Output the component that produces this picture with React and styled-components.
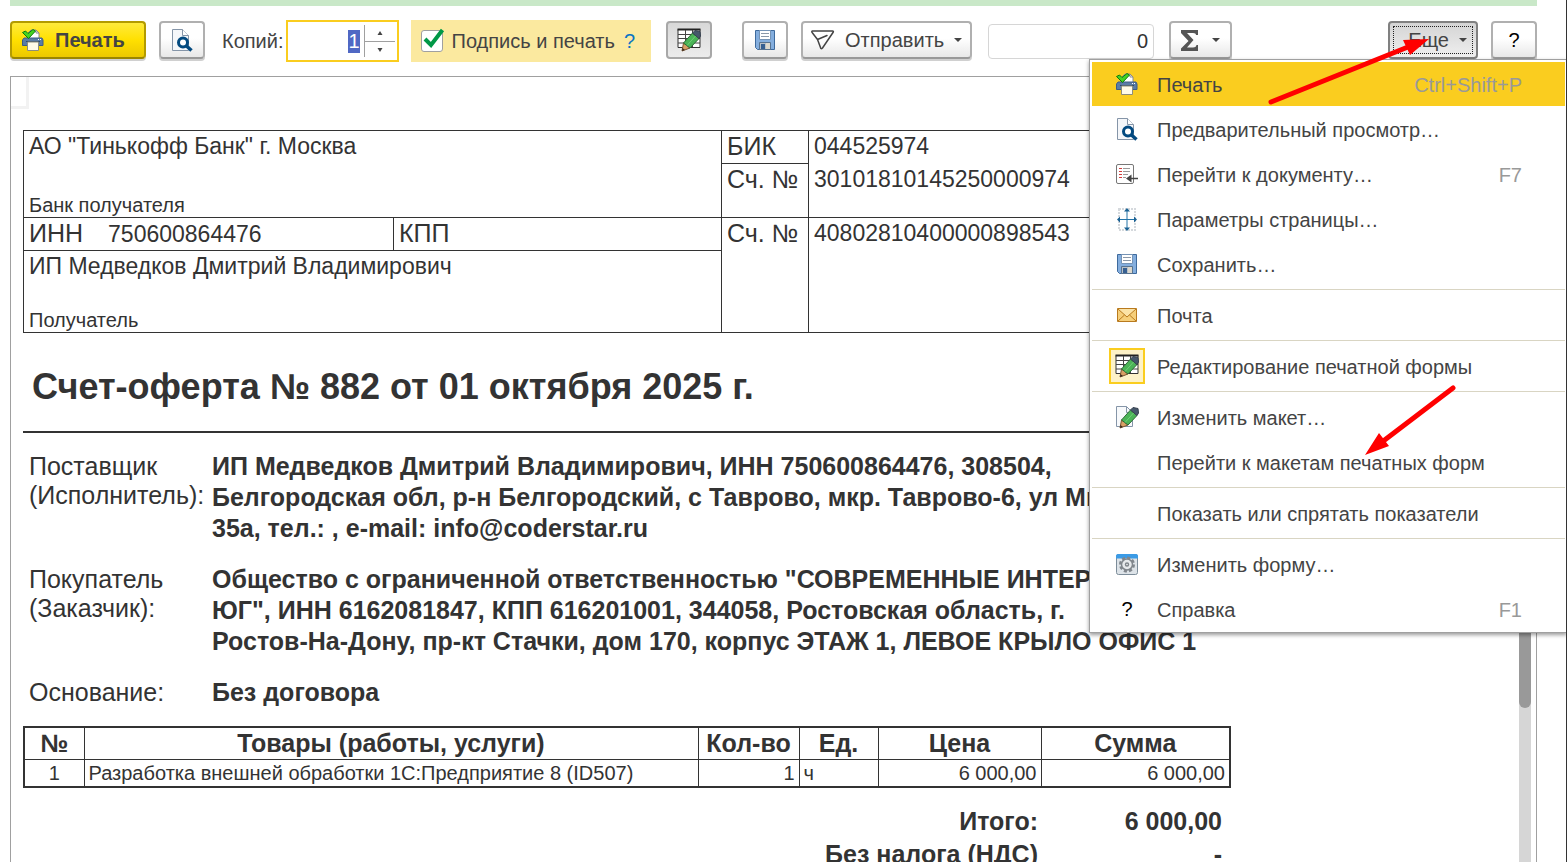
import React, { useEffect, useRef } from 'react'
import styled, { createGlobalStyle, css } from 'styled-components'

const color = {
  text: '#444',
  ink: '#333',
  muted: '#999',
  line: '#a0a0a0',
  accent: '#facd1f',
  accentLight: '#fbe99f',
}

const GlobalStyle = createGlobalStyle`
  * {
    box-sizing: border-box;
  }

  body {
    margin: 0;
    background: #fff;
    color: ${color.text};
    font-family: 'Liberation Sans', Arial, sans-serif;
    font-size: 20px;
    overflow: hidden;
  }

  button,
  input {
    font: inherit;
    color: inherit;
  }
`

/* Window */

const Window = styled.main`
  position: relative;
  display: flex;
  flex-direction: column;
  height: 100vh;
  padding: 0 29px 0 10px;
  border-right: 1px solid #333;
  overflow: hidden;
`

const Notice = styled.div`
  flex: none;
  height: 6px;
  background: #c9e8c8;
`

const Toolbar = styled.header`
  display: flex;
  flex: none;
  align-items: center;
  height: 42px;
  margin: 14px 0;
`

const Group = styled.div`
  display: flex;
  align-items: center;
  gap: 13px;
  margin-right: ${props => props.$after || 0}px;
`

const Spacer = styled.div`
  flex: 1;
`

const Button = styled.button`
  display: flex;
  align-items: center;
  justify-content: ${props => props.$align || 'center'};
  gap: ${props => props.$gap || 10}px;
  height: 38px;
  min-width: ${props => props.$width || 46}px;
  margin-bottom: 2px;
  padding: 0 ${props => props.$pad || 0}px;
  border: 2px solid #b0b0b0;
  border-bottom-color: #999;
  border-radius: 4px;
  background: linear-gradient(#fff 45%, #e8e8e8);
  box-shadow: 0 2px 0 #d0d0d0;
  white-space: nowrap;

  ${props =>
    props.$primary &&
    css`
      border-color: #b39b00;
      border-bottom-color: #9a8500;
      background: linear-gradient(#ffea3c, #ffe000 50%, #ecc800);
      font-weight: bold;
    `}

  ${props =>
    props.$pressed &&
    css`
      border-color: #a8a8a8;
      background: linear-gradient(#d8d8d8, #ececec);
      box-shadow: none;
    `}

  ${props =>
    props.$open &&
    css`
      border-color: #808080;
      background: linear-gradient(#d4d4d4, #efefef);
      box-shadow: none;
      outline: 1px dotted #222;
      outline-offset: -6px;
    `}
`

const Caret = styled.span`
  width: 0;
  border: 4px solid transparent;
  border-top-color: #444;
  border-bottom: 0;
`

const HelpMark = styled.span`
  color: #000;
`

const Label = styled.label`
  margin-right: 2px;
`

const Stepper = styled.div`
  display: flex;
  align-items: center;
  width: 113px;
  height: 42px;
  margin-right: 12px;
  border: 2px solid ${color.accent};
`

const StepperInput = styled.input`
  flex: 1;
  min-width: 0;
  padding: 0 4px 0 0;
  border: 0;
  outline: 0;
  text-align: right;

  &::selection {
    background: #5068c4;
    color: #fff;
  }
`

const StepperButtons = styled.div`
  display: flex;
  flex-direction: column;
  width: 33px;
  padding-right: 2px;
  border-left: 1px solid ${color.line};
`

const StepButton = styled.button`
  display: flex;
  align-items: center;
  justify-content: center;
  height: 16px;
  padding: 0;
  border: 0;
  background: none;

  & + & {
    border-top: 1px solid ${color.line};
  }
`

const SignOption = styled.div`
  display: flex;
  align-items: center;
  gap: 9px;
  height: 42px;
  margin-right: 15px;
  padding: 0 16px 0 10px;
  background: ${color.accentLight};
`

const CheckWrap = styled.span`
  position: relative;
  display: flex;

  svg {
    position: absolute;
    left: 2px;
    bottom: 4px;
    pointer-events: none;
  }
`

const Checkbox = styled.input`
  appearance: none;
  width: 22px;
  height: 22px;
  margin: 0;
  border: 1px solid ${color.line};
  border-radius: 3px;
  background: #fff;
`

const HelpLink = styled.a`
  color: #0a74c4;
  text-decoration: none;
`

const SumField = styled.input`
  width: 166px;
  height: 35px;
  margin-right: 15px;
  padding: 0 5px;
  border: 1px solid #d6d6d6;
  border-radius: 4px;
  color: #333;
  text-align: right;
`

/* Drop-down menu */

const Menu = styled.nav`
  position: absolute;
  top: 59px;
  right: -1px;
  width: 478px;
  padding: 2px 2px 0;
  border: 1px solid ${color.line};
  border-right: 0;
  background: #fff;
  box-shadow: 0 2px 4px rgba(0, 0, 0, 0.4);
`

const MenuItem = styled.button`
  display: flex;
  align-items: center;
  width: 100%;
  height: 44px;
  margin-bottom: 1px;
  padding: 0 43px 0 17px;
  border: 0;
  background: ${props => (props.$active ? color.accent : 'none')};
  text-align: left;
`

const MenuIcon = styled.span`
  display: flex;
  align-items: center;
  justify-content: center;
  width: 36px;
  height: 36px;
  margin-right: 12px;
  border: 2px solid ${props => (props.$checked ? color.accent : 'transparent')};
  background: ${props => (props.$checked ? '#fdf2c8' : 'none')};
  color: #000;
`

const MenuText = styled.span`
  flex: 1;
  padding-top: 2px;
  white-space: nowrap;
`

const Shortcut = styled.span`
  padding-top: 2px;
  color: ${color.muted};
`

const Separator = styled.hr`
  height: 1px;
  margin: 3px 0;
  border: 0;
  background: #d9d5c3;
`

const Arrows = styled.svg`
  position: absolute;
  top: 0;
  right: 0;
  pointer-events: none;
`

/* Printed form */

const Viewer = styled.section`
  display: flex;
  flex: 1;
  min-height: 0;
  border: 1px solid ${color.line};
  border-bottom: 0;
  color: ${color.ink};
`

const Sheet = styled.article`
  flex: 1;
  min-width: 0;
  overflow: hidden;
`

const Corner = styled.div`
  width: 18px;
  height: 32px;
  border: solid #f2f2f2;
  border-width: 0 3px 3px 0;
`

const Content = styled.div`
  width: 1206px;
  margin: 21px 0 0 12px;
`

const ScrollTrack = styled.div`
  width: 12px;
  margin-right: 5px;
  background: #d6d6d6;
`

const ScrollThumb = styled.div`
  height: 631px;
  border-radius: 6px;
  background: #999;
`

const Table = styled.table`
  width: 100%;
  table-layout: fixed;
  border-collapse: collapse;
`

const BankCell = styled.td`
  height: ${props => props.$height}px;
  padding: 0 5px;
  border: 1px solid ${color.ink};
  border-top-width: ${props => (props.$joined ? 0 : 1)}px;
  border-bottom-width: ${props => (props.$open ? 0 : 1)}px;
  font-size: ${props => (props.$value ? 23 : 25)}px;
  line-height: 31px;
  vertical-align: top;
  white-space: nowrap;
`

const Stack = styled.div`
  display: flex;
  flex-direction: column;
  justify-content: space-between;
  height: ${props => props.$height}px;
  font-size: 23px;
`

const Caption = styled.small`
  font-size: 20px;
  line-height: 24px;
`

const TaxId = styled.span`
  margin-left: 25px;
  font-size: 23px;
`

const Title = styled.h1`
  margin: 0;
  padding: 31px 0 21px 9px;
  border-bottom: 2px solid ${color.ink};
  font-size: 36px;
  line-height: 46px;
  white-space: nowrap;
`

const Parties = styled.dl`
  display: grid;
  grid-template-columns: 183px 1fr;
  row-gap: 20px;
  margin: 18px 0 18px;
  padding-left: 6px;
  font-size: 25px;
`

const PartyLabel = styled.dt`
  padding-top: 1px;
  line-height: 29px;
  white-space: pre;
`

const PartyValue = styled.dd`
  margin: 0;
  font-weight: bold;
  line-height: 31px;
  white-space: pre;
`

const Goods = styled(Table)`
  border: 2px solid ${color.ink};
`

const GoodsHead = styled.th`
  height: 32px;
  padding: 0;
  border: 1px solid ${color.ink};
  font-size: 25px;
  line-height: 30px;
`

const GoodsCell = styled.td`
  height: 28px;
  padding: 0 4px;
  border: 1px solid ${color.ink};
  line-height: 26px;
  text-align: ${props => props.$align || 'left'};
  white-space: nowrap;
`

const Totals = styled(Table)`
  margin-top: 17px;
  font-size: 25px;
  font-weight: bold;
`

const TotalLabel = styled.th`
  padding: 0 3px 0 0;
  line-height: 33px;
  text-align: right;
`

const TotalValue = styled.td`
  padding: 0 7px 0 0;
  text-align: right;
`

/* Icons */

const PrintIcon = () => (
  <svg width="22" height="22" viewBox="0 0 22 22">
    <path d="M6 10V4l3-3h5l3 3v6z" fill="#fff" stroke="#8a8a8a" />
    <path d="M14 1v3h3" fill="none" stroke="#8a8a8a" />
    <path d="M2 9h18l1 2v5.500H0.500V11z" fill="#5a7ca6" stroke="#3d5d85" />
    <path d="M4 12.500h14" stroke="#2f4a6d" />
    <path d="M16 10.500h1M18 10.500h1" stroke="#fff" />
    <path d="M5.500 13h11v8.500h-11z" fill="#fffbe8" stroke="#8d8d7c" />
    <path
      d="M0.500 3.500L3.500 2l2.500 2.500L11 0.500 13.500 2 6.500 9.500z"
      fill="#45d321"
      stroke="#0b7a0d"
    />
  </svg>
)

const PreviewIcon = () => (
  <svg width="22" height="23" viewBox="0 0 22 23">
    <path
      d="M1.500 0.500h10l6 6v15h-16z"
      fill="#f5f7fa"
      stroke="#8595a8"
    />
    <path d="M11.500 0.500v6h6" fill="#fff" stroke="#8595a8" />
    <circle cx="12" cy="13.500" r="4.500" fill="#fff" stroke="#034a80" strokeWidth="3" />
    <path d="M15.500 17l5 4.500" stroke="#034a80" strokeWidth="3.500" />
  </svg>
)

const Pencil = () => (
  <g>
    <path d="M5 23l1.500-8 6.500 5z" fill="#d9a066" stroke="#7b5530" />
    <path d="M5 23l.5-3 2.500 2z" fill="#3a2a20" />
    <path d="M6.500 15L15.500 5l6.500 5.500-9 9.500z" fill="#4bb457" stroke="#2c6b35" />
    <path d="M10 17.500L18.500 8" stroke="#6fd176" />
    <path d="M15.500 5L18 2.500l5 1 .5 4.500-1.500 2.500z" fill="#46586b" stroke="#36414f" />
  </g>
)

const EditIcon = () => (
  <svg width="25" height="24" viewBox="0 0 25 24">
    <path d="M1 1.500h22v18H1z" fill="#fff" stroke="#333" />
    <path d="M0.500 1.500h23" stroke="#222" strokeWidth="2" />
    <path d="M1 6.500h22M1 10.500h22M1 15h22M8.500 2v17M15.500 2v17" stroke="#444" />
    <Pencil />
  </svg>
)

const TemplateIcon = () => (
  <svg width="25" height="24" viewBox="0 0 25 24">
    <path d="M1.500 1.500h10l6 6v14h-16z" fill="#f7f9fb" stroke="#8595a8" />
    <path d="M11.500 1.500v6h6" fill="none" stroke="#8595a8" />
    <Pencil />
  </svg>
)

const SaveIcon = () => (
  <svg width="20" height="20" viewBox="0 0 20 20">
    <path d="M0.500 0.500h19v19h-17l-2-2z" fill="#84aede" stroke="#3e6a9d" />
    <path d="M4.500 0.500h11v9h-11z" fill="#fff" stroke="#7593b5" />
    <path d="M6 3.500h8M6 6.500h8" stroke="#8b98a8" />
    <path d="M4.500 12.500h11v7h-11z" fill="#b9c0c6" stroke="#587390" />
    <path d="M6 14h4v5H6z" fill="#365f91" />
    <path d="M11 13h4v6h-4z" fill="#dcd8cd" />
  </svg>
)

const SendIcon = () => (
  <svg width="24" height="20" viewBox="0 0 24 20">
    <path
      d="M1.500 1h20q1.500 0 .5 1.500L11.500 18q-1.500 1.500-2-.5L6.500 9.500l-5-6.500Q0 1.500 1.500 1z M6.500 9.500L16 5.500"
      fill="none"
      stroke="#444"
      strokeWidth="1.500"
      strokeLinejoin="round"
      strokeLinecap="round"
    />
  </svg>
)

const SumIcon = () => (
  <svg width="18" height="21" viewBox="0 0 18 21">
    <path
      d="M0 0h17v5h-2q0-2-3-2H6l6.500 7L6 17.500h6q3 0 3.500-2.500H17v6H0v-2.500L7.500 11 0 3z"
      fill="#555"
    />
  </svg>
)

const CheckIcon = () => (
  <svg width="22" height="20" viewBox="0 0 22 20">
    <path d="M2 11l6 6L19.500 2" fill="none" stroke="#009846" strokeWidth="4" />
  </svg>
)

const GoToIcon = () => (
  <svg width="22" height="20" viewBox="0 0 22 20">
    <rect x="0.500" y="0.500" width="17" height="19" rx="1.500" fill="#fff" stroke="#777" />
    <path d="M3 4.500h3M3 7.500h3M3 10.500h3M3 13.500h3" stroke="#d33c3c" />
    <path d="M7 4.500h7M7 7.500h7M7 10.500h5M7 13.500h3" stroke="#999" />
    <path d="M14 14.500h8" stroke="#444" strokeWidth="1.500" />
    <path d="M10 14.500l5.500-4v8z" fill="#444" />
  </svg>
)

const PageSetupIcon = () => (
  <svg width="20" height="23" viewBox="0 0 20 23">
    <path d="M2 1h16v21H2z" fill="#fff" stroke="#d5d9dd" strokeWidth="2" strokeDasharray="2 1" />
    <path d="M10 2v19M2 11.500h16" stroke="#2474a8" />
    <path
      d="M10 0l3 3.500H7zM10 23l3-3.500H7zM0 11.500l3-3v6zM20 11.500l-3-3v6z"
      fill="#1b6294"
    />
  </svg>
)

const MailIcon = () => (
  <svg width="20" height="14" viewBox="0 0 20 14">
    <path d="M0.500 0.500h19v13H0.500z" fill="#f6cf7a" stroke="#b97a1e" />
    <path d="M1 1l9 8 9-8M1 13l6.500-6M19 13l-6.500-6" fill="#fbe3a7" stroke="#b97a1e" />
  </svg>
)

const FormIcon = () => (
  <svg width="22" height="21" viewBox="0 0 22 21">
    <rect x="0.500" y="0.500" width="21" height="20" rx="2" fill="#dde3e8" stroke="#7c8c99" />
    <path d="M0 4.500V2q0-2 2-2h18q2 0 2 2v2.500z" fill="#3b9be6" />
    <circle cx="11" cy="10.500" r="6.500" fill="none" stroke="#80868c" strokeWidth="3" strokeDasharray="3 2" />
    <circle cx="11" cy="10.500" r="5.500" fill="#e6e9eb" stroke="#80868c" strokeWidth="1.500" />
    <circle cx="11" cy="10.500" r="1.500" fill="#fff" stroke="#80868c" strokeWidth="1.500" />
  </svg>
)

const StepArrow = ({ down }) => (
  <svg width="6" height="4" viewBox="0 0 6 4">
    <path d={down ? 'M0.500 0h5L3 4z' : 'M0.500 4h5L3 0z'} fill="#444" />
  </svg>
)

const menuGroups = [
  [
    { text: 'Печать', icon: <PrintIcon />, shortcut: 'Ctrl+Shift+P', active: true },
    { text: 'Предварительный просмотр…', icon: <PreviewIcon /> },
    { text: 'Перейти к документу…', icon: <GoToIcon />, shortcut: 'F7' },
    { text: 'Параметры страницы…', icon: <PageSetupIcon /> },
    { text: 'Сохранить…', icon: <SaveIcon /> },
  ],
  [{ text: 'Почта', icon: <MailIcon /> }],
  [{ text: 'Редактирование печатной формы', icon: <EditIcon />, checked: true }],
  [
    { text: 'Изменить макет…', icon: <TemplateIcon /> },
    { text: 'Перейти к макетам печатных форм' },
  ],
  [{ text: 'Показать или спрятать показатели' }],
  [
    { text: 'Изменить форму…', icon: <FormIcon /> },
    { text: 'Справка', icon: '?', shortcut: 'F1' },
  ],
]

const parties = [
  {
    label: 'Поставщик\n(Исполнитель):',
    value:
      'ИП Медведков Дмитрий Владимирович, ИНН 750600864476, 308504,\nБелгородская обл, р-н Белгородский, с Таврово, мкр. Таврово-6, ул Мира,\n35а, тел.: , e-mail: info@coderstar.ru',
  },
  {
    label: 'Покупатель\n(Заказчик):',
    value:
      'Общество с ограниченной ответственностью "СОВРЕМЕННЫЕ ИНТЕРЬЕРЫ\nЮГ", ИНН 6162081847, КПП 616201001, 344058, Ростовская область, г.\nРостов-На-Дону, пр-кт Стачки, дом 170, корпус ЭТАЖ 1, ЛЕВОЕ КРЫЛО ОФИС 1',
  },
  { label: 'Основание:', value: 'Без договора' },
]

const Columns = ({ widths }) => (
  <colgroup>
    {widths.map((width, i) => <col key={i} width={width} />)}
  </colgroup>
)

const CopiesField = () => {
  const input = useRef(null)

  useEffect(() => {
    input.current.focus()
    input.current.select()
  }, [])

  return (
    <Stepper>
      <StepperInput id="copies" ref={input} defaultValue="1" />
      <StepperButtons>
        <StepButton aria-label="Больше"><StepArrow /></StepButton>
        <StepButton aria-label="Меньше"><StepArrow down /></StepButton>
      </StepperButtons>
    </Stepper>
  )
}

const MoreMenu = () => (
  <Menu>
    {menuGroups.map((group, i) => (
      <React.Fragment key={i}>
        {i > 0 && <Separator />}
        {group.map(item => (
          <MenuItem key={item.text} $active={item.active}>
            <MenuIcon $checked={item.checked}>{item.icon}</MenuIcon>
            <MenuText>{item.text}</MenuText>
            {item.shortcut && <Shortcut>{item.shortcut}</Shortcut>}
          </MenuItem>
        ))}
      </React.Fragment>
    ))}
  </Menu>
)

const BankDetails = () => (
  <Table>
    <Columns widths={[370, 328, 87, 421]} />
    <tbody>
      <tr>
        <BankCell colSpan={2} rowSpan={2} $value>
          <Stack $height={86}>
            АО "Тинькофф Банк" г. Москва
            <Caption>Банк получателя</Caption>
          </Stack>
        </BankCell>
        <BankCell $height={33}>БИК</BankCell>
        <BankCell $value $open>044525974</BankCell>
      </tr>
      <tr>
        <BankCell $height={54}>Сч. №</BankCell>
        <BankCell $value $joined>30101810145250000974</BankCell>
      </tr>
      <tr>
        <BankCell $height={33}>
          ИНН<TaxId>750600864476</TaxId>
        </BankCell>
        <BankCell>КПП</BankCell>
        <BankCell rowSpan={2}>Сч. №</BankCell>
        <BankCell rowSpan={2} $value>40802810400000898543</BankCell>
      </tr>
      <tr>
        <BankCell colSpan={2} $height={82} $value>
          <Stack $height={81}>
            ИП Медведков Дмитрий Владимирович
            <Caption>Получатель</Caption>
          </Stack>
        </BankCell>
      </tr>
    </tbody>
  </Table>
)

const GoodsTable = () => (
  <Goods>
    <Columns widths={[60, 614, 101, 79, 163, 189]} />
    <thead>
      <tr>
        {['№', 'Товары (работы, услуги)', 'Кол-во', 'Ед.', 'Цена', 'Сумма'].map(name => (
          <GoodsHead key={name}>{name}</GoodsHead>
        ))}
      </tr>
    </thead>
    <tbody>
      <tr>
        <GoodsCell $align="center">1</GoodsCell>
        <GoodsCell>Разработка внешней обработки 1С:Предприятие 8 (ID507)</GoodsCell>
        <GoodsCell $align="right">1</GoodsCell>
        <GoodsCell>ч</GoodsCell>
        <GoodsCell $align="right">6 000,00</GoodsCell>
        <GoodsCell $align="right">6 000,00</GoodsCell>
      </tr>
    </tbody>
  </Goods>
)

const App = () => (
  <>
    <GlobalStyle />
    <Window>
      <Notice />
      <Toolbar>
        <Group $after={17}>
          <Button $primary $width={136} $align="flex-start" $pad={10} $gap={11}>
            <PrintIcon />
            Печать
          </Button>
          <Button aria-label="Предварительный просмотр"><PreviewIcon /></Button>
        </Group>
        <Label htmlFor="copies">Копий:</Label>
        <CopiesField />
        <SignOption>
          <CheckWrap>
            <Checkbox type="checkbox" id="sign" defaultChecked />
            <CheckIcon />
          </CheckWrap>
          <label htmlFor="sign">Подпись и печать</label>
          <HelpLink href="#help">?</HelpLink>
        </SignOption>
        <Group $after={30}>
          <Button $pressed aria-label="Редактирование"><EditIcon /></Button>
        </Group>
        <Group $after={16}>
          <Button aria-label="Сохранить"><SaveIcon /></Button>
          <Button $pad={8}>
            <SendIcon />
            Отправить
            <Caret />
          </Button>
        </Group>
        <SumField aria-label="Сумма" defaultValue="0" />
        <Button $pad={10} $gap={13} aria-label="Итоги">
          <SumIcon />
          <Caret />
        </Button>
        <Spacer />
        <Group>
          <Button $open $width={90} $align="flex-end" $pad={9}>
            Еще
            <Caret />
          </Button>
          <Button><HelpMark>?</HelpMark></Button>
        </Group>
      </Toolbar>
      <Viewer>
        <Sheet>
          <Corner />
          <Content>
            <BankDetails />
            <Title>Счет-оферта № 882 от 01 октября 2025 г.</Title>
            <Parties>
              {parties.map(({ label, value }) => (
                <React.Fragment key={label}>
                  <PartyLabel>{label}</PartyLabel>
                  <PartyValue>{value}</PartyValue>
                </React.Fragment>
              ))}
            </Parties>
            <GoodsTable />
            <Totals>
              <Columns widths={[1018, 188]} />
              <tbody>
                <tr>
                  <TotalLabel>Итого:</TotalLabel>
                  <TotalValue>6 000,00</TotalValue>
                </tr>
                <tr>
                  <TotalLabel>Без налога (НДС)</TotalLabel>
                  <TotalValue>-</TotalValue>
                </tr>
              </tbody>
            </Totals>
          </Content>
        </Sheet>
        <ScrollTrack>
          <ScrollThumb />
        </ScrollTrack>
      </Viewer>
      <MoreMenu />
      <Arrows width="310" height="470" viewBox="1256 0 310 470">
        <path d="M1271 102L1408 47M1453 388L1382 442" stroke="#f00" strokeWidth="5" strokeLinecap="round" />
        <path d="M1429 39l-26 1 7 15zM1365 455l14-22 10 13z" fill="#f00" />
      </Arrows>
    </Window>
  </>
)

export default App
